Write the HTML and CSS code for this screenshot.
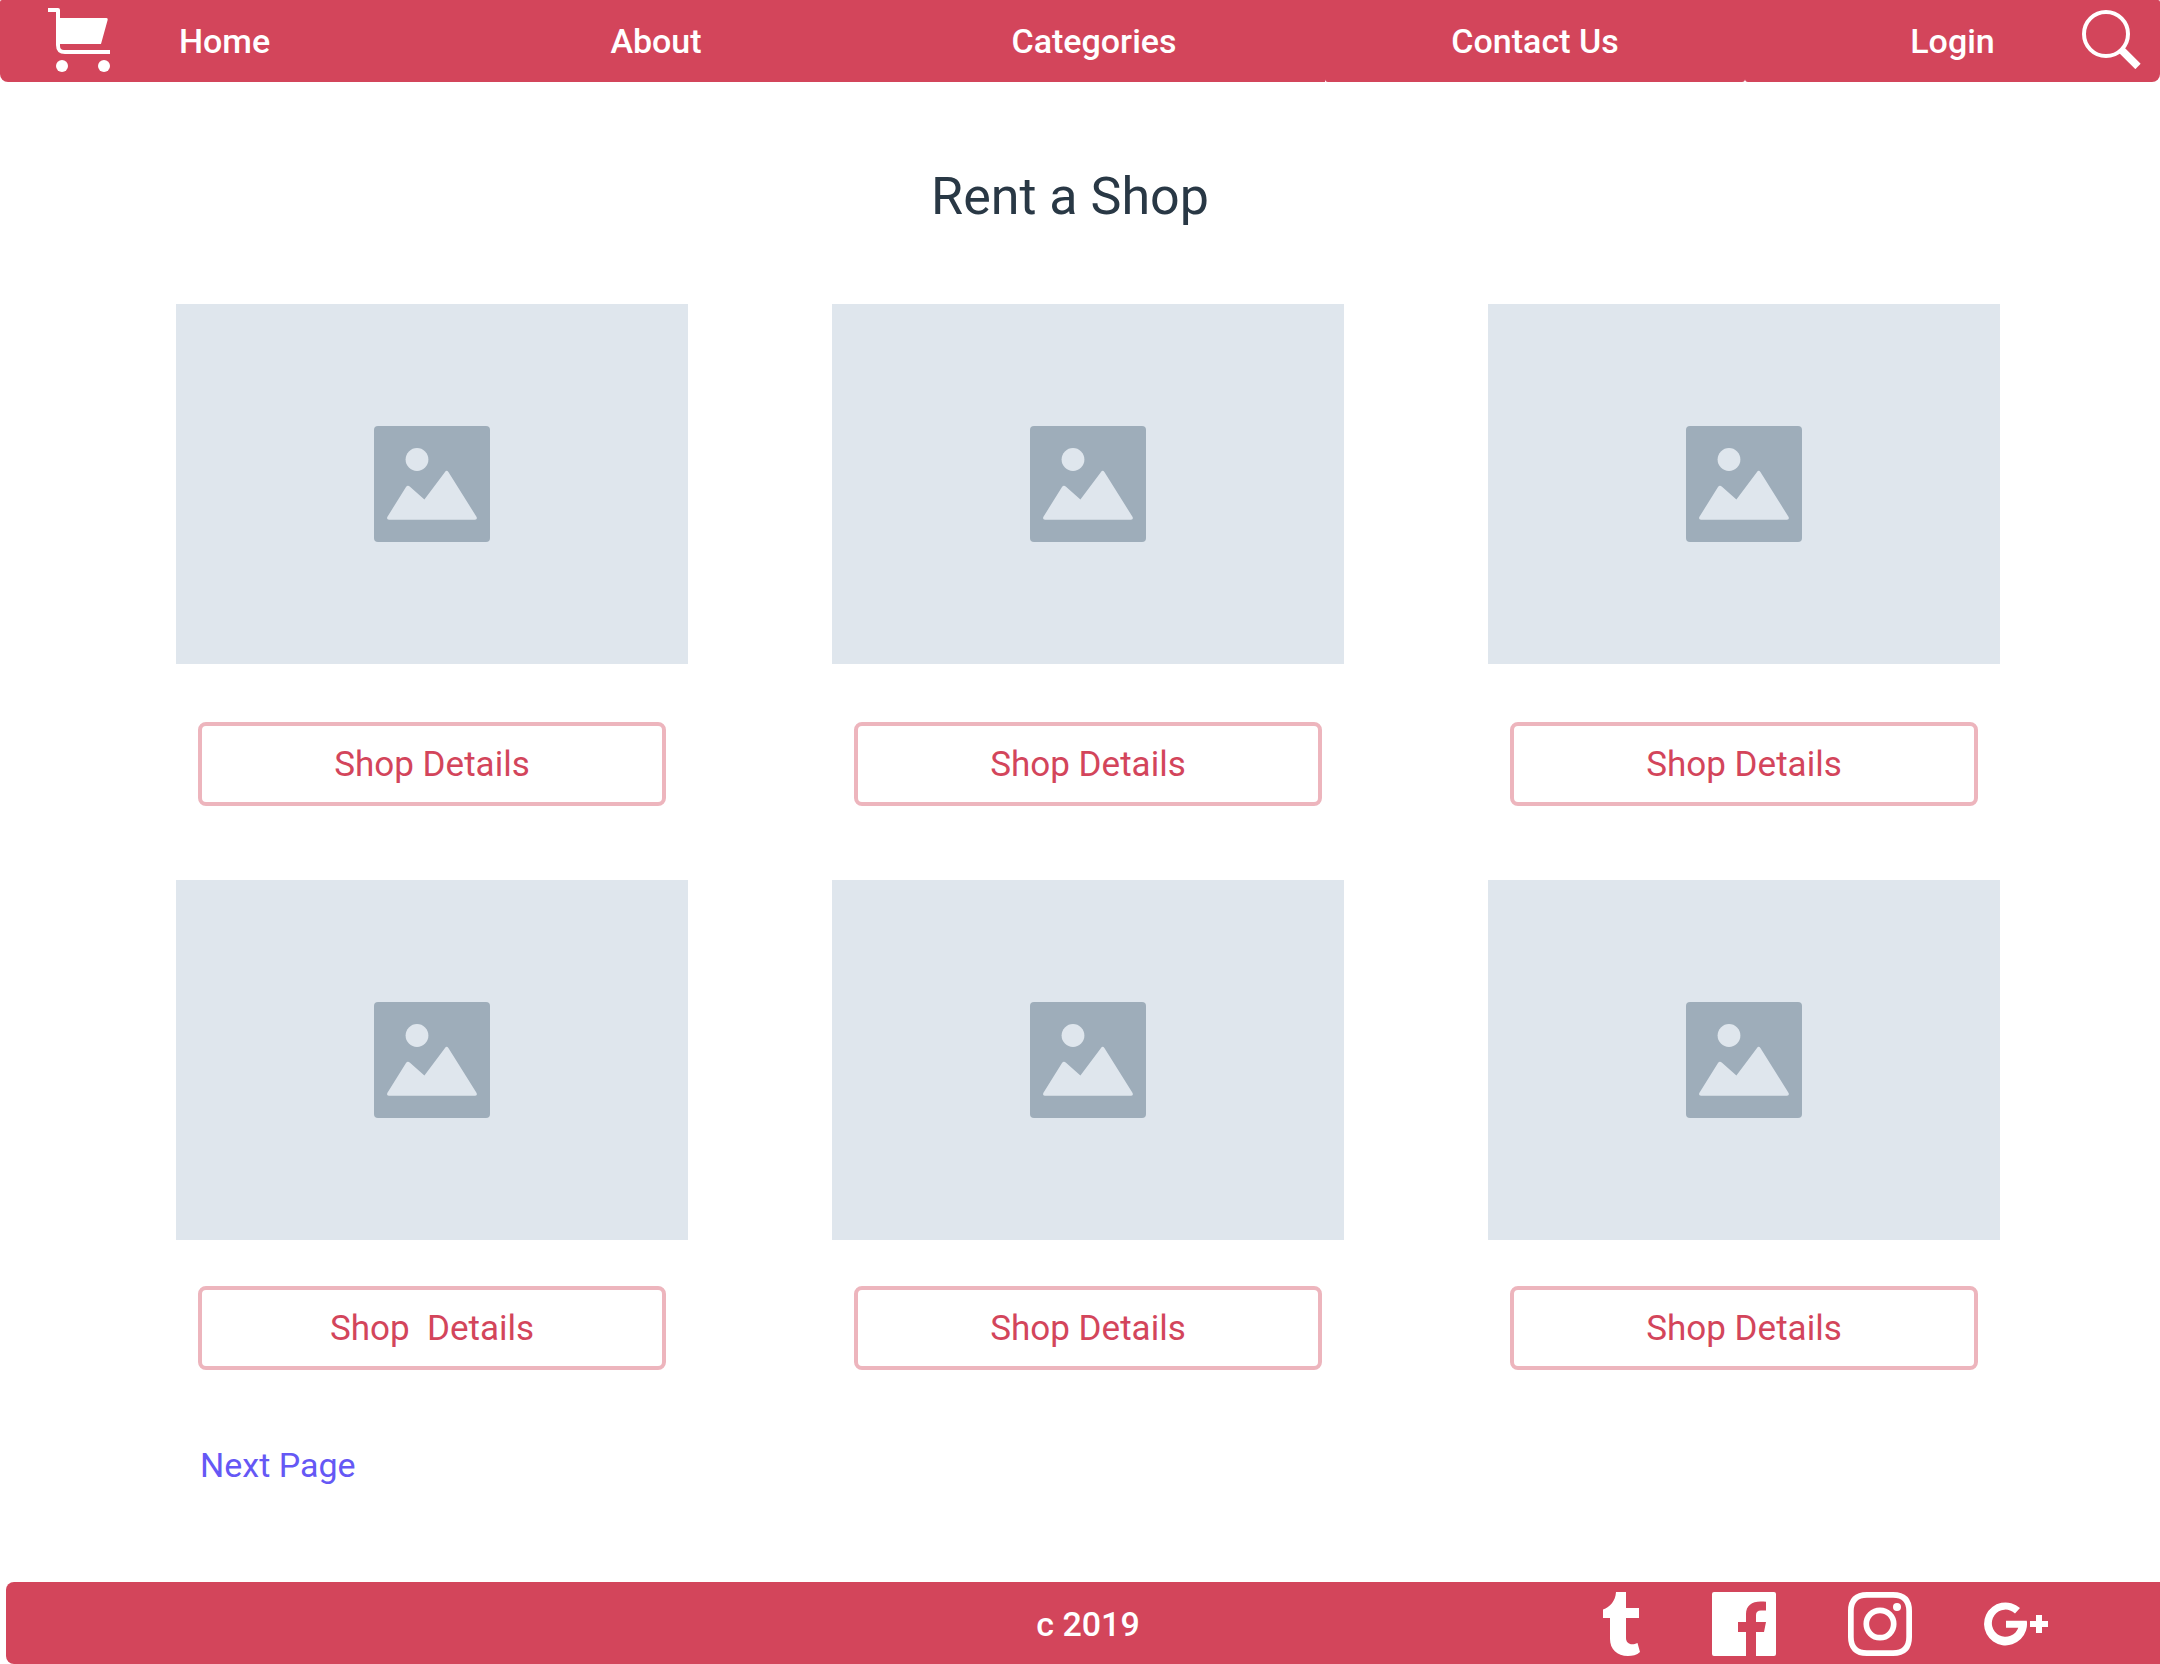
FILE: index.html
```html
<!DOCTYPE html>
<html lang="en">
<head>
<meta charset="utf-8">
<meta name="viewport" content="width=device-width, initial-scale=1">
<title>Rent a Shop</title>
<link rel="stylesheet" href="styles.css">
</head>
<body>
<svg class="sprite" aria-hidden="true">
  <symbol id="picture" viewBox="0 0 116 116">
    <rect class="picture-frame" width="116" height="116" rx="4"/>
    <circle class="picture-shape" cx="43" cy="33.5" r="11.4"/>
    <path class="picture-shape" d="M13.3 91 32 61Q33.7 58.7 36 60.7L50.4 73.6 71 46Q72.7 43.6 74.4 46L102.6 91Q103.6 93.7 101 93.7H15Q12.4 93.7 13.3 91Z"/>
  </symbol>
</svg>

<header>
  <nav class="nav" aria-label="Main">
    <div class="nav-cell">
      <a class="cart" href="#cart" aria-label="Cart">
        <svg width="62" height="64" viewBox="0 0 62 64" fill="currentColor">
          <path d="M0 0H10Q12 0 12 2V10H58.5Q60 10 59.7 11.8L53 36H12V38Q12 42 16 42H62V46H17Q8 46 8 37V4H0Z"/>
          <circle cx="14" cy="58" r="6"/><circle cx="56" cy="58" r="6"/>
        </svg>
      </a>
      <a class="nav-link" href="#home">Home</a>
    </div>
    <div class="nav-cell"><a class="nav-link" href="#about">About</a></div>
    <div class="nav-cell"><a class="nav-link" href="#categories">Categories</a></div>
    <div class="nav-cell nav-cell-notch"><a class="nav-link" href="#contact">Contact Us</a></div>
    <div class="nav-cell">
      <a class="nav-link" href="#login">Login</a>
      <button class="search" type="button" aria-label="Search">
        <svg width="59" height="60" viewBox="0 0 59 60" fill="none" stroke="currentColor">
          <circle cx="24" cy="25" r="22" stroke-width="4"/>
          <path d="M39.5 41 56 57.500" stroke-width="7.500"/>
        </svg>
      </button>
    </div>
  </nav>
</header>

<main>
  <h1 class="title">Rent a Shop</h1>
  <div class="shops">
    <article class="shop">
      <div class="photo"><svg class="picture" role="img" aria-label="Shop photo"><use href="#picture"/></svg></div>
      <button class="details" type="button">Shop Details</button>
    </article>
    <article class="shop">
      <div class="photo"><svg class="picture" role="img" aria-label="Shop photo"><use href="#picture"/></svg></div>
      <button class="details" type="button">Shop Details</button>
    </article>
    <article class="shop">
      <div class="photo"><svg class="picture" role="img" aria-label="Shop photo"><use href="#picture"/></svg></div>
      <button class="details" type="button">Shop Details</button>
    </article>
  </div>
  <div class="shops shops-last">
    <article class="shop">
      <div class="photo"><svg class="picture" role="img" aria-label="Shop photo"><use href="#picture"/></svg></div>
      <button class="details" type="button">Shop  Details</button>
    </article>
    <article class="shop">
      <div class="photo"><svg class="picture" role="img" aria-label="Shop photo"><use href="#picture"/></svg></div>
      <button class="details" type="button">Shop Details</button>
    </article>
    <article class="shop">
      <div class="photo"><svg class="picture" role="img" aria-label="Shop photo"><use href="#picture"/></svg></div>
      <button class="details" type="button">Shop Details</button>
    </article>
  </div>
  <a class="next" href="#next">Next Page</a>
</main>

<footer class="footer">
  <p class="copyright">c 2019</p>
  <div class="social">
    <a href="#tumblr" aria-label="Tumblr">
      <svg width="37" height="64" viewBox="0 0 37 64" fill="currentColor"><path d="M13 0H23V16H36V26H23V46C23 51.500 28 54 34.500 51L37 60C34 63 29 64 25 64C14 64 7 57 7 47V26H0V17.500C7 15 12.500 9 13 0Z"/></svg>
    </a>
    <a href="#facebook" aria-label="Facebook">
      <svg width="64" height="64" viewBox="0 0 64 64" fill="currentColor"><path d="M2 0H62Q64 0 64 2V62Q64 64 62 64H44V40H52L54 30H44V23Q44 18.500 49 18.500H54V9.800C42 8 34 12 34 22V30H26V40H34V64H2Q0 64 0 62V2Q0 0 2 0Z"/></svg>
    </a>
    <a href="#instagram" aria-label="Instagram">
      <svg width="64" height="64" viewBox="0 0 64 64" fill="none" stroke="currentColor" stroke-width="5.700"><path d="M19 2.850H45Q61.150 2.850 61.150 19V45Q61.150 61.150 45 61.150H19Q2.850 61.150 2.850 45V19Q2.850 2.850 19 2.850Z"/><circle cx="32" cy="32" r="13.700"/><circle cx="49" cy="15" r="4" fill="currentColor" stroke="none"/></svg>
    </a>
    <a href="#google-plus" aria-label="Google Plus">
      <svg width="64" height="44" viewBox="0 0 64 44" fill="currentColor"><path d="M36 6 31 11.500A13.600 13.600 0 1 0 34.300 25.700H22V18.700H42.800A21.500 21.500 0 1 1 36 6Z"/><path d="M52 13H58V19H64V25H58V31H52V25H46V19H52Z"/></svg>
    </a>
  </div>
</footer>
</body>
</html>
```

FILE: styles.css
```css
:root {
  --red: #d3455b;
  --red-light: #edb5bd;
  --ink: #293845;
  --violet: #6558f5;
  --placeholder: #dfe6ed;
  --placeholder-dark: #9eadba;
}

* { box-sizing: border-box; }

body {
  margin: 0;
  min-height: 100vh;
  display: flex;
  flex-direction: column;
  background: #fff;
  color: var(--ink);
  font: 400 34px/40px Roboto, "Liberation Sans", sans-serif;
}

a { color: inherit; text-decoration: none; }
svg { display: block; }
button { font: inherit; cursor: pointer; }

.sprite { position: absolute; width: 0; height: 0; }

.nav {
  display: grid;
  grid-template-columns: 449fr 414fr 462fr 420fr 415fr;
  min-height: 82px;
  color: #fff;
}

.nav-cell {
  display: grid;
  grid-template-columns: 1fr auto 1fr;
  align-items: center;
  background: var(--red);
}

.nav-cell:first-child { border-radius: 2px 0 0 8px; }
.nav-cell:last-child { border-radius: 0 2px 8px 3px; }
.nav-cell-notch { border-radius: 0 0 3px 3px; }

.nav-link { grid-column: 2; font-weight: 500; }
.cart { margin-left: 48px; padding-bottom: 2px; }

.search {
  justify-self: end;
  margin-right: 19px;
  padding: 0 0 4px;
  border: 0;
  background: none;
  color: inherit;
}

.title {
  margin: 83px 0 75px;
  padding-right: 20px;
  font-size: 52px;
  line-height: 64px;
  font-weight: 400;
  text-align: center;
}

.shops {
  display: grid;
  grid-template-columns: repeat(3, 1fr);
  column-gap: 144px;
  padding: 0 160px 0 176px;
  margin-bottom: 74px;
}

.shop { display: flex; flex-direction: column; gap: 58px; }
.shops-last .shop { gap: 46px; }

.photo {
  display: grid;
  place-items: center;
  height: 360px;
  background: var(--placeholder);
}

.picture { width: 116px; height: 116px; }
.picture-frame { fill: var(--placeholder-dark); }
.picture-shape { fill: var(--placeholder); }

.details {
  margin: 0 22px;
  height: 84px;
  padding: 2px 0 0;
  border: 4px solid var(--red-light);
  border-radius: 8px;
  background: #fff;
  color: var(--red);
  font-size: 35px;
  white-space: pre;
}

.next {
  display: inline-block;
  margin: 1px 0 40px 200px;
  color: var(--violet);
}

.footer {
  display: grid;
  grid-template-columns: 1fr auto 1fr;
  align-items: center;
  min-height: 82px;
  margin: auto 0 0 6px;
  padding: 2px 0 0 10px;
  border-radius: 8px 0 0 8px;
  background: var(--red);
  color: #fff;
}

.copyright { grid-column: 2; margin: 0; font-weight: 500; }

.social {
  display: flex;
  align-items: center;
  justify-content: flex-end;
  gap: 72px;
  padding-right: 112px;
}
```
